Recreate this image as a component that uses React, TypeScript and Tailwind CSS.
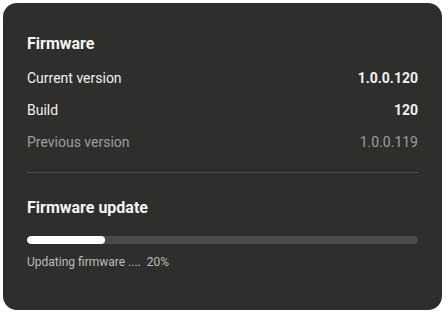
import React from "react";

export default function App() {
  const progress = 20;
  return (
    <div className="w-[448px] h-[316px] bg-white p-[3px] pr-[6px]" style={{ fontFamily: "Roboto, 'Noto Sans', sans-serif" }}>
      <div className="w-[439px] h-[307px] rounded-[14px] bg-[#2e2e2c] px-6 pt-[31px] flex flex-col">
        <div className="h-5 leading-5 text-[16px] font-bold text-[#f5f5f5]">Firmware</div>
        <div className="mt-2 flex flex-col">
          <div className="h-8 flex items-center justify-between text-[14px] text-[#f2f2f2]">
            <span>Current version</span>
            <span className="font-bold">1.0.0.120</span>
          </div>
          <div className="h-8 flex items-center justify-between text-[14px] text-[#f2f2f2]">
            <span>Build</span>
            <span className="font-bold">120</span>
          </div>
          <div className="h-8 flex items-center justify-between text-[14px] text-[#9e9e9c]">
            <span>Previous version</span>
            <span>1.0.0.119</span>
          </div>
        </div>
        <div className="mt-[14px] h-px bg-[#474745]" />
        <div className="mt-[25px] h-5 leading-5 text-[16px] font-bold text-[#f5f5f5]">Firmware update</div>
        <div className="mt-[18px] h-2 rounded-full bg-[#4a4a48] overflow-hidden">
          <div className="h-full rounded-full bg-white" style={{ width: `${progress}%` }} />
        </div>
        <div className="mt-[11px] h-[14px] leading-[14px] text-[12px] text-[#bdbdbb]">
          Updating firmware ....&nbsp; {progress}%
        </div>
      </div>
    </div>
  );
}
